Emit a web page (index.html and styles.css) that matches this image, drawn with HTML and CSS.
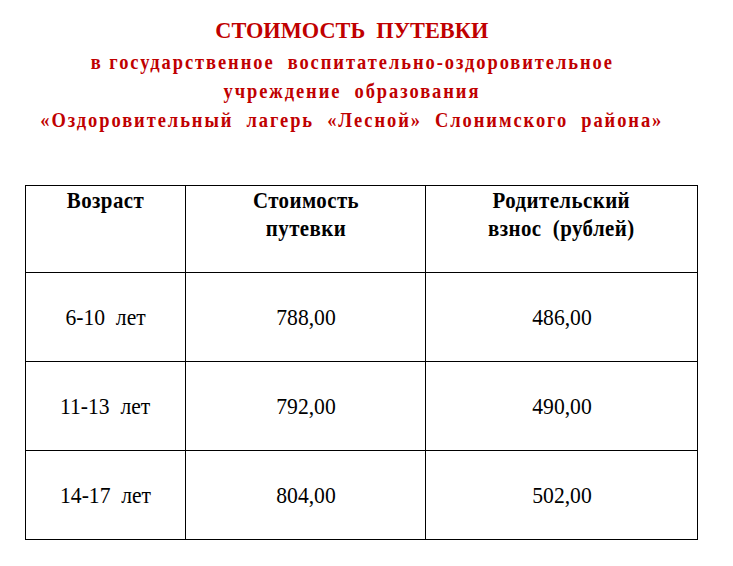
FILE: index.html
```html
<!DOCTYPE html>
<html>
<head>
<meta charset="utf-8">
<title>Стоимость путевки</title>
<link rel="stylesheet" href="styles.css">
</head>
<body>
<header class="title">
  <div class="t1"><span class="c t">СТОИМОСТЬ&nbsp; ПУТЕВКИ</span></div>
  <div class="t2"><span class="c s">в государственное&nbsp; воспитательно-оздоровительное</span></div>
  <div class="t2"><span class="c s">учреждение&nbsp; образования</span></div>
  <div class="t2"><span class="c s">«Оздоровительный&nbsp; лагерь&nbsp; «Лесной»&nbsp; Слонимского&nbsp; района»</span></div>
</header>
<table class="price">
  <colgroup>
    <col class="w1"><col class="w2"><col class="w3">
  </colgroup>
  <thead>
    <tr>
      <th><span class="c h">Возраст</span></th>
      <th><span class="c h">Стоимость<br>путевки</span></th>
      <th><span class="c h">Родительский<br>взнос&nbsp; (рублей)</span></th>
    </tr>
  </thead>
  <tbody>
    <tr><td><span class="c">6-10&nbsp; лет</span></td><td><span class="c">788,00</span></td><td><span class="c">486,00</span></td></tr>
    <tr><td><span class="c">11-13&nbsp; лет</span></td><td><span class="c">792,00</span></td><td><span class="c">490,00</span></td></tr>
    <tr><td><span class="c">14-17&nbsp; лет</span></td><td><span class="c">804,00</span></td><td><span class="c">502,00</span></td></tr>
  </tbody>
</table>
</body>
</html>
```
FILE: styles.css
```css
html, body {
  margin: 0;
  padding: 0;
  background: #ffffff;
}
html, body, table, th, td, .c {
  font-family: "Times New Roman", "Liberation Serif", Tinos, "DejaVu Serif", serif;
}
body {
  color: #000000;
}
.c {
  display: inline-block;
  transform: scaleX(0.9);
  white-space: nowrap;
}
.c.t {
  transform: scaleX(0.93);
}
.c.s {
  transform: scaleX(0.84);
  letter-spacing: 2.3px;
}
.c.h {
  transform: scaleX(0.87);
  letter-spacing: 0.5px;
}
.title {
  color: #c00000;
  font-weight: bold;
  padding: 15px 29px 0 0;
}
.t1, .t2 {
  display: flex;
  justify-content: center;
}
.t1 {
  font-size: 24px;
  line-height: 30px;
  margin-bottom: 2px;
}
.t2 {
  font-size: 22px;
  line-height: 29px;
}
.price {
  border-collapse: collapse;
  margin: 51px 0 0 25px;
  width: 673px;
}
.w1 { width: 160px; }
.w2 { width: 241px; }
.w3 { width: 272px; }
.price th, .price td {
  border: 1px solid #000000;
  text-align: center;
  padding: 0;
}
.price th {
  font-size: 24px;
  font-weight: bold;
  line-height: 28px;
  vertical-align: top;
  height: 87px;
  padding-top: 0;
  box-sizing: border-box;
}
.price td {
  font-size: 24px;
  height: 88px;
  vertical-align: middle;
}
```
